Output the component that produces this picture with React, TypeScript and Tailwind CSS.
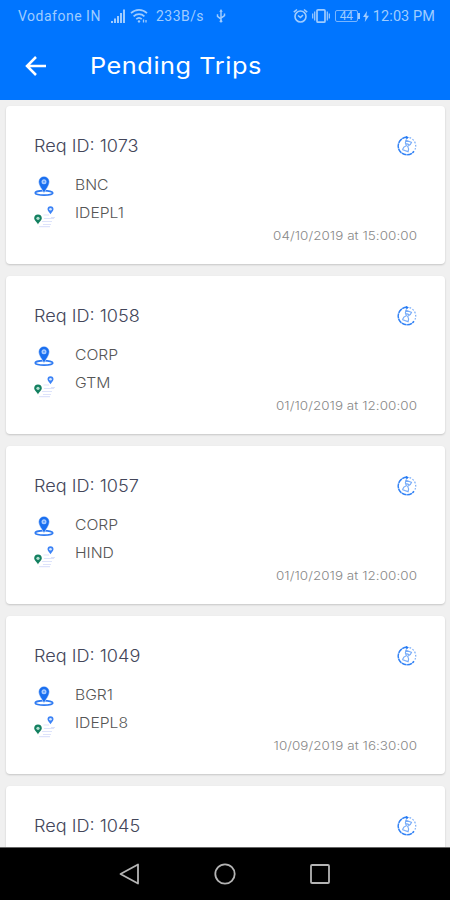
import React from 'react';

type Trip = {
  id: number;
  from?: string;
  to?: string;
  date?: string;
};

const trips: Trip[] = [
  { id: 1073, from: 'BNC', to: 'IDEPL1', date: '04/10/2019 at 15:00:00' },
  { id: 1058, from: 'CORP', to: 'GTM', date: '01/10/2019 at 12:00:00' },
  { id: 1057, from: 'CORP', to: 'HIND', date: '01/10/2019 at 12:00:00' },
  { id: 1049, from: 'BGR1', to: 'IDEPL8', date: '10/09/2019 at 16:30:00' },
  { id: 1045 },
];

function StatusBar() {
  return (
    <div className="flex h-8 items-center pr-[15px] pl-[18px] font-[Roboto,sans-serif] text-[14px] text-[#9fccff]">
      <span className="w-[92px] whitespace-nowrap tracking-[0.500px]">Vodafone IN</span>
      <svg className="h-4 w-4" viewBox="0 0 16 16" stroke="currentColor" strokeWidth="2">
        <path d="M2 15v-2M5 15v-4.500M8 15V8M11 15V5M14 15V1.500" />
      </svg>
      <svg className="ml-1 h-4 w-[18px]" viewBox="0 0 18 16" fill="none" stroke="currentColor" strokeWidth="1.700">
        <path d="M1 5.200C5.500.8 12.500.8 17 5.200M3.600 8.300c3-3 7.800-3 10.800 0M6.300 11.200c1.600-1.500 3.800-1.500 5.400 0" />
        <circle cx="9" cy="13.400" r="1.200" fill="currentColor" stroke="none" />
        <path d="M13.500 11.500v3M16 12v2.500" strokeWidth="1.300" />
      </svg>
      <span className="ml-2 w-[60px] whitespace-nowrap tracking-[0.450px]">233B/s</span>
      <svg className="h-[14px] w-[10px]" viewBox="0 0 11 16" fill="none" stroke="currentColor" strokeWidth="1.700">
        <path d="M5.500 2v12M1.500 6v2.500l4 3M9.500 5v2.500l-4 3" />
        <path d="m5.500 0 2 3h-4z" fill="currentColor" stroke="none" />
        <circle cx="5.500" cy="14" r="1.500" fill="currentColor" stroke="none" />
      </svg>
      <div className="ml-auto flex items-center">
        <svg className="h-4 w-[15px]" viewBox="0 0 15 16" fill="none" stroke="currentColor" strokeWidth="1.600">
          <circle cx="7.500" cy="8.500" r="5.500" />
          <path d="m5 7.500 2.500 2 2.500-2.500M.8 4.200 4 1.500M14.200 4.200 11 1.500" />
        </svg>
        <svg className="ml-1 h-4 w-[18px]" viewBox="0 0 18 16" fill="none" stroke="currentColor" strokeWidth="1.700">
          <rect x="5" y="1.800" width="8" height="12.400" rx="1" />
          <path d="M2.700 3.500v9M15.300 3.500v9M.7 5.500v5M17.300 5.500v5" strokeWidth="1.200" />
        </svg>
        <div className="ml-[5px] flex h-[12px] w-[23px] items-center justify-center rounded-[2px] border border-[#78b5ff] text-[12px] leading-none tracking-[-0.200px]">44</div>
        <div className="h-[6px] w-[2px] bg-current" />
        <svg className="ml-[3px] h-[11px] w-[6px]" viewBox="0 0 6 11" fill="currentColor">
          <path d="M4 0 0 6h2.500L1.800 11 6 4.700H3.500z" />
        </svg>
        <span className="ml-1 pt-px text-[14.500px] whitespace-nowrap tracking-[0.080px]">12:03 PM</span>
      </div>
    </div>
  );
}

function PinIcon() {
  return (
    <svg className="h-5 w-5" viewBox="0 0 20 20" fill="none">
      <ellipse cx="10" cy="16.900" rx="8.800" ry="2.200" stroke="#2f7bf2" strokeWidth="1.700" />
      <path d="M10 17.300C8.300 13.200 4.600 10 4.600 5.700a5.400 5.400 0 0 1 10.800 0c0 4.300-3.700 7.500-5.400 11.600z" fill="#1a6ff0" stroke="#fff" strokeWidth=".5" />
      <circle cx="10" cy="5.700" r="2.500" fill="#a9ccff" />
      <circle cx="10" cy="5.700" r="1" fill="#5b9bf8" />
    </svg>
  );
}

function RouteIcon() {
  return (
    <svg className="h-[22px] w-[22px]" viewBox="0 0 22 22" fill="none">
      <path d="M15 9H9.500M20 12.500H10M18 15.500H8M21 11.500h-4M17 18.500H9M16 20.700H5" stroke="#dde3fb" strokeWidth="1.200" />
      <path d="M16.500 8.200c-.8-1.800-3-3-3-5A3 3 0 0 1 19.500 3.200c0 2-2.200 3.200-3 5z" fill="#3b82f6" />
      <circle cx="16.500" cy="3.300" r="1.300" fill="#d5e6ff" />
      <path d="M4 18.500C3 15.800.2 14.600.2 12.200a3.800 3.800 0 0 1 7.600 0c0 2.400-2.800 3.600-3.800 6.300z" fill="#138060" />
      <circle cx="4" cy="12.300" r="1.600" fill="#b5dfd1" />
    </svg>
  );
}

// hourglass inside a part-dashed ring
function PendingIcon() {
  return (
    <svg className="h-5 w-5" viewBox="0 0 20 20" fill="none" stroke="#2f80f5">
      <path d="M10 1.200A8.800 8.800 0 1 0 17 15.300" strokeWidth="1.500" strokeDasharray="5 .5" />
      <path d="M12.500 1.600A8.800 8.800 0 0 1 18 13.500" strokeWidth="1.200" strokeDasharray="1.800 1.500" opacity=".65" />
      <path d="m9 0 2.500 1.500L9.500 3.300z" fill="#1976f5" strokeWidth=".5" />
      <g strokeWidth="1.200" opacity=".65" transform="rotate(20 10 10)">
        <path d="M6.500 5h7M6.500 15h7M7 5c-.2 3 1 4 2.300 5C8 11 6.800 12 7 15M13 5c.2 3-1 4-2.300 5 1.300 1 2.500 2 2.300 5M8.500 8h3" />
      </g>
    </svg>
  );
}

function TripCard({ trip }: { trip: Trip }) {
  return (
    <div className="h-[158px] shrink-0 rounded-[4px] bg-white pt-[26px] pr-7 pl-7 shadow-[0_1px_2px_rgba(0,0,0,0.18)]">
      <div className="flex h-7 items-center justify-between">
        <h2 className="origin-left scale-x-[1.065] text-[17px] leading-7 font-light whitespace-nowrap text-[#43465a]">Req ID: {trip.id}</h2>
        <PendingIcon />
      </div>
      {trip.from && (
        <div className="mt-[11px] flex h-7 items-center">
          <div className="w-[41px] pt-[2px]">
            <PinIcon />
          </div>
          <span className="origin-left scale-x-[1.120] pb-px text-[14px] font-light text-[#555]">{trip.from}</span>
        </div>
      )}
      {trip.to && (
        <div className="flex h-7 items-center">
          <div className="w-[41px] pt-[7px]">
            <RouteIcon />
          </div>
          <span className="origin-left scale-x-[1.120] pb-px text-[14px] font-light text-[#555]">{trip.to}</span>
        </div>
      )}
      {trip.date && (
        <p className="mt-px origin-right scale-x-[1.120] text-right text-[12px] leading-4 font-light tracking-[0.050px] text-[#888]">{trip.date}</p>
      )}
    </div>
  );
}

function NavBar() {
  return (
    <nav className="flex h-[53px] items-center justify-center gap-[73px] border-t border-[#666] bg-black text-[#b4b4b4]">
      <svg className="h-[22px] w-[22px]" viewBox="0 0 22 22" fill="none" stroke="currentColor" strokeWidth="1.800" strokeLinejoin="round">
        <path d="M19 1.500v19L1.500 11z" />
      </svg>
      <svg className="h-[22px] w-[22px]" viewBox="0 0 22 22" fill="none" stroke="currentColor" strokeWidth="1.800">
        <circle cx="11" cy="11" r="9.700" />
      </svg>
      <svg className="h-[22px] w-[22px]" viewBox="0 0 22 22" fill="none" stroke="currentColor" strokeWidth="1.800">
        <rect x="2" y="2" width="18" height="18" rx="1" />
      </svg>
    </nav>
  );
}

export default function App() {
  return (
    <div className="flex h-[900px] w-[450px] flex-col overflow-hidden bg-[#f0f0f0] font-[Inter,sans-serif]">
      <header className="h-[100px] shrink-0 bg-[#0075ff]">
        <StatusBar />
        <div className="flex h-[68px] items-center pl-[25px] text-white">
          <svg className="h-[22px] w-[22px]" viewBox="0 0 22 22" fill="none" stroke="currentColor" strokeWidth="2.500">
            <path d="M21 11H2.500M11 2 2 11l9 9" />
          </svg>
          <h1 className="ml-[43px] origin-left scale-x-[1.100] text-[23px] font-normal tracking-[0.500px] whitespace-nowrap">Pending Trips</h1>
        </div>
      </header>
      <main className="flex min-h-0 flex-1 flex-col gap-3 overflow-hidden pt-[6px] pr-[5px] pl-[6px]">
        {trips.map((trip) => (
          <TripCard key={trip.id} trip={trip} />
        ))}
      </main>
      <NavBar />
    </div>
  );
}
